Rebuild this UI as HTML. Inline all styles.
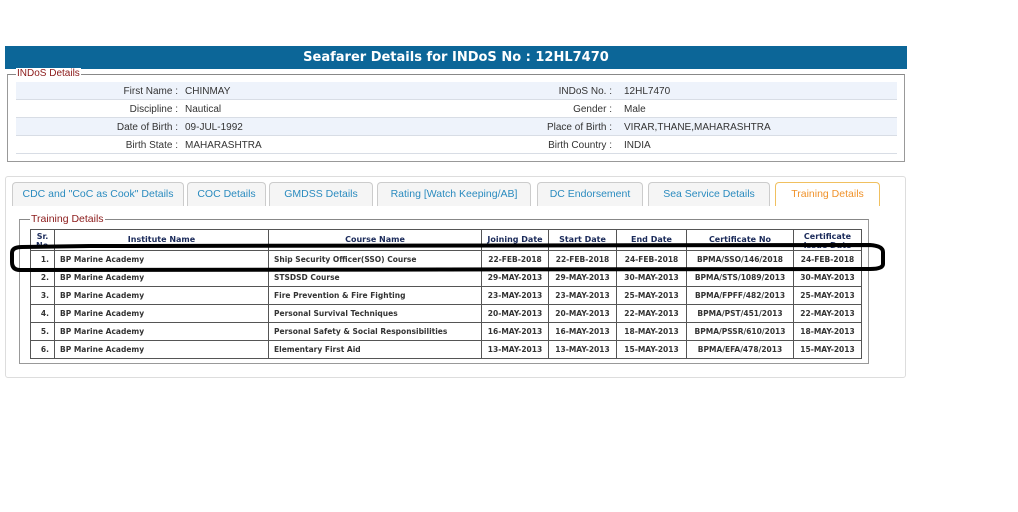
<!DOCTYPE html>
<html><head><meta charset="utf-8"><style>
*{margin:0;padding:0;box-sizing:border-box}
body{width:1018px;height:512px;background:#fff;position:relative;overflow:hidden;font-family:"Liberation Sans",Arial,sans-serif}
.abs{position:absolute}
.hdr{left:5px;top:46px;width:902px;height:23px;background:#0c6698;color:#fff;font:bold 13px "DejaVu Sans",Verdana,sans-serif;text-align:center;line-height:23px}
.fs{border:1px solid #999;border-top-color:#888}
.lg{background:#fff;color:#8b1a1a;font-size:10px;padding:0 1px;line-height:12px}
.row{left:16px;width:881px;height:18px;border-bottom:1px solid #d8dde5;font-size:10px;color:#333}
.row.a{background:#eef3fb}
.row span{position:absolute;top:4px}
.lbl{text-align:right;width:300px}
.panel{left:5px;top:176px;width:901px;height:202px;border:1px solid #ddd;border-radius:3px}
.tab{top:182px;height:24px;border:1px solid #ccc;border-bottom:none;border-radius:4px 4px 0 0;background:#f5f5f5;color:#2a8bbf;font-size:10.5px;text-align:center;line-height:22px;white-space:nowrap}
.tab.on{background:#fff;border-color:#f0c060;color:#f0922a}
table{position:absolute;left:30px;top:229px;width:831px;table-layout:fixed;border-collapse:collapse;font:bold 7.5px "DejaVu Sans",Verdana,sans-serif;color:#333;background:#fff}
td,th{border:1.5px solid #555;height:18px;padding:0 5px;white-space:nowrap;overflow:hidden}
th{color:#1a2a5a;font-size:8px;height:20px;vertical-align:top;padding-top:2px;line-height:9px}
td.c{text-align:center;padding:0 2px}
td.r{text-align:right}
</style></head><body>
<div class="abs hdr">Seafarer Details for INDoS No : 12HL7470</div>
<div class="abs fs" style="left:7px;top:74px;width:898px;height:88px"></div>
<div class="abs lg" style="left:16px;top:68px">INDoS Details</div>
<div class="abs row a" style="top:82px"><span class="lbl" style="left:-138px">First Name :</span><span style="left:169px">CHINMAY</span><span class="lbl" style="left:296px">INDoS No. :</span><span style="left:608px">12HL7470</span></div>
<div class="abs row" style="top:100px"><span class="lbl" style="left:-138px">Discipline :</span><span style="left:169px">Nautical</span><span class="lbl" style="left:296px">Gender :</span><span style="left:608px">Male</span></div>
<div class="abs row a" style="top:118px"><span class="lbl" style="left:-138px">Date of Birth :</span><span style="left:169px">09-JUL-1992</span><span class="lbl" style="left:296px">Place of Birth :</span><span style="left:608px">VIRAR,THANE,MAHARASHTRA</span></div>
<div class="abs row" style="top:136px"><span class="lbl" style="left:-138px">Birth State :</span><span style="left:169px">MAHARASHTRA</span><span class="lbl" style="left:296px">Birth Country :</span><span style="left:608px">INDIA</span></div>

<div class="abs panel"></div>
<div class="abs tab" style="left:12px;width:172px">CDC and "CoC as Cook" Details</div>
<div class="abs tab" style="left:187px;width:79px">COC Details</div>
<div class="abs tab" style="left:269px;width:104px">GMDSS Details</div>
<div class="abs tab" style="left:377px;width:154px">Rating [Watch Keeping/AB]</div>
<div class="abs tab" style="left:537px;width:106px">DC Endorsement</div>
<div class="abs tab" style="left:648px;width:122px">Sea Service Details</div>
<div class="abs tab on" style="left:775px;width:105px">Training Details</div>

<div class="abs fs" style="left:19px;top:219px;width:850px;height:145px"></div>
<div class="abs lg" style="left:30px;top:213px;font-size:10.5px">Training Details</div>

<table>
<colgroup><col style="width:24px"><col style="width:214px"><col style="width:213px"><col style="width:67px"><col style="width:68px"><col style="width:70px"><col style="width:107px"><col style="width:68px"></colgroup>
<tr><th>Sr.<br>No.</th><th style="padding-top:5px">Institute Name</th><th style="padding-top:5px">Course Name</th><th style="padding-top:5px">Joining Date</th><th style="padding-top:5px">Start Date</th><th style="padding-top:5px">End Date</th><th style="padding-top:5px">Certificate No</th><th>Certificate<br>Issue Date</th></tr>
<tr><td class="r">1.</td><td>BP Marine Academy</td><td>Ship Security Officer(SSO) Course</td><td class="c">22-FEB-2018</td><td class="c">22-FEB-2018</td><td class="c">24-FEB-2018</td><td class="c">BPMA/SSO/146/2018</td><td class="c">24-FEB-2018</td></tr>
<tr><td class="r">2.</td><td>BP Marine Academy</td><td>STSDSD Course</td><td class="c">29-MAY-2013</td><td class="c">29-MAY-2013</td><td class="c">30-MAY-2013</td><td class="c">BPMA/STS/1089/2013</td><td class="c">30-MAY-2013</td></tr>
<tr><td class="r">3.</td><td>BP Marine Academy</td><td>Fire Prevention &amp; Fire Fighting</td><td class="c">23-MAY-2013</td><td class="c">23-MAY-2013</td><td class="c">25-MAY-2013</td><td class="c">BPMA/FPFF/482/2013</td><td class="c">25-MAY-2013</td></tr>
<tr><td class="r">4.</td><td>BP Marine Academy</td><td>Personal Survival Techniques</td><td class="c">20-MAY-2013</td><td class="c">20-MAY-2013</td><td class="c">22-MAY-2013</td><td class="c">BPMA/PST/451/2013</td><td class="c">22-MAY-2013</td></tr>
<tr><td class="r">5.</td><td>BP Marine Academy</td><td>Personal Safety &amp; Social Responsibilities</td><td class="c">16-MAY-2013</td><td class="c">16-MAY-2013</td><td class="c">18-MAY-2013</td><td class="c">BPMA/PSSR/610/2013</td><td class="c">18-MAY-2013</td></tr>
<tr><td class="r">6.</td><td>BP Marine Academy</td><td>Elementary First Aid</td><td class="c">13-MAY-2013</td><td class="c">13-MAY-2013</td><td class="c">15-MAY-2013</td><td class="c">BPMA/EFA/478/2013</td><td class="c">15-MAY-2013</td></tr>
</table>

<svg class="abs" style="left:0;top:0" width="1018" height="512">
<path d="M90 246 L870 245 Q883 246 883 252 L883 264 Q883 269 870 269 L20 270 Q12 270 12 262 L12 253 Q12 247 22 247 L90 246" fill="none" stroke="#000" stroke-width="4"/>
</svg>
</body></html>
